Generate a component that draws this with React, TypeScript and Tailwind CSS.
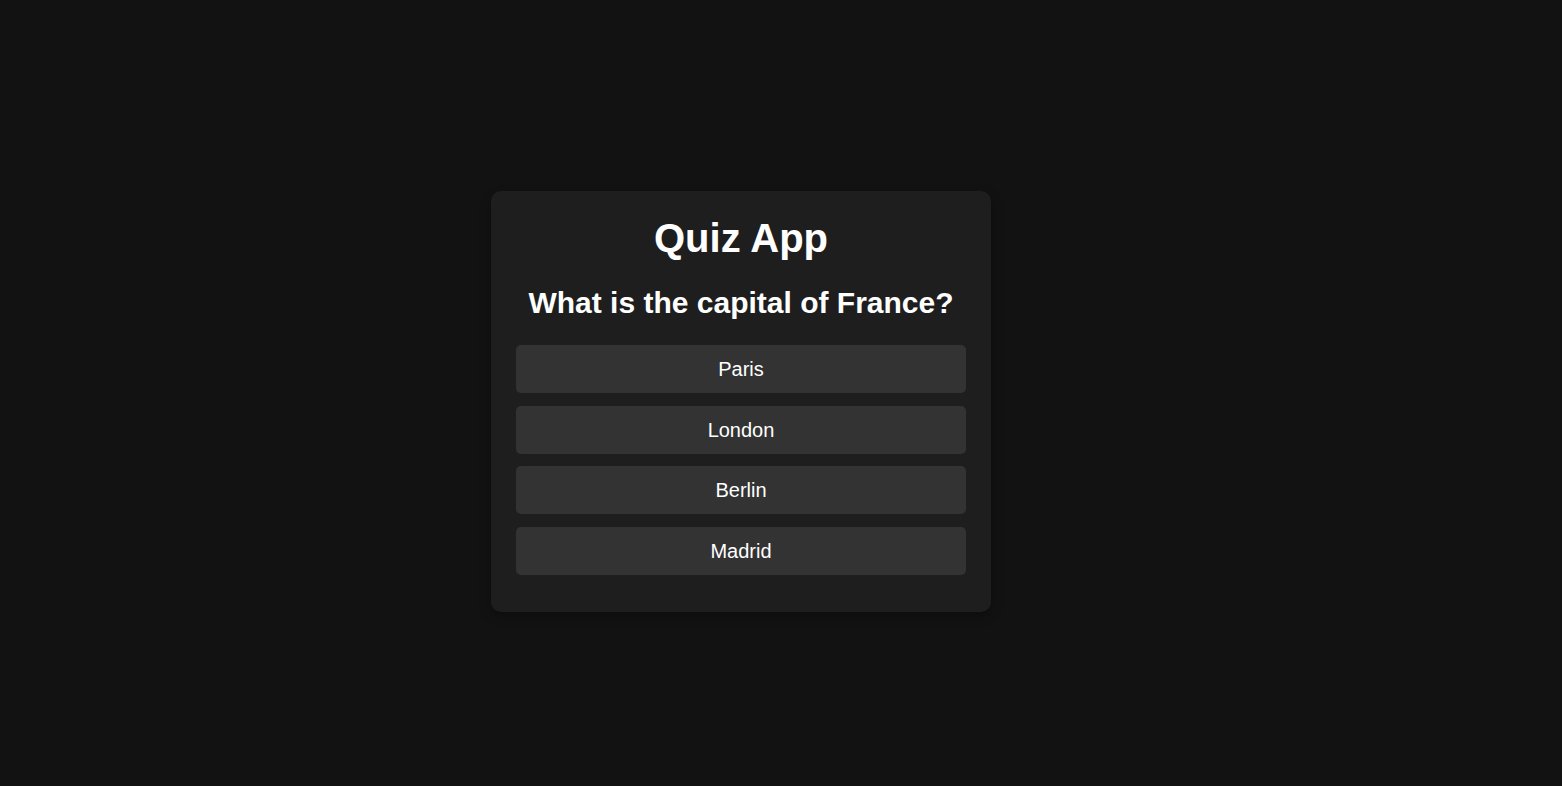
import React, { useState } from 'react'

const answers = ['Paris', 'London', 'Berlin', 'Madrid']

function App() {
  const [picked, setPicked] = useState<string | null>(null)

  return (
    <div className="min-h-screen bg-[#121212] text-white pt-[191px] pl-[491px] font-['Liberation_Sans',Arial,sans-serif]">
      <div className="w-[500px] bg-[#1e1e1e] rounded-[10px] px-[25px] pt-[24px] pb-[37px] shadow-[0_4px_12px_rgba(0,0,0,0.3)] text-center">
        <h1 className="text-[40px] leading-[46px] font-bold">Quiz App</h1>
        <h2 className="mt-[24px] text-[30px] leading-[35px] font-bold">What is the capital of France?</h2>
        <div className="mt-[25px] flex flex-col gap-[12.67px]">
          {answers.map((a) => (
            <button
              key={a}
              onClick={() => setPicked(a)}
              className={
                'h-[48px] w-full rounded-[5px] text-[20px] leading-[24px] text-white ' +
                (picked === a ? 'bg-[#3d3d3d]' : 'bg-[#333333]')
              }
            >
              {a}
            </button>
          ))}
        </div>
      </div>
    </div>
  )
}

export default App
